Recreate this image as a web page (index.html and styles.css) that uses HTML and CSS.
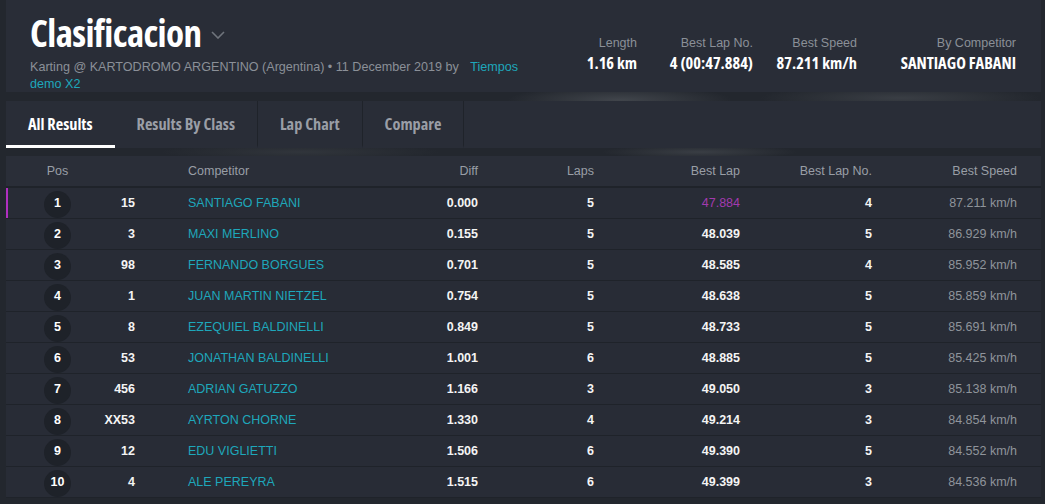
FILE: index.html
```html
<!DOCTYPE html>
<html lang="es">
<head>
<meta charset="utf-8">
<title>Clasificacion</title>
<link rel="stylesheet" href="styles.css">
</head>
<body>
<div class="page">
  <header class="hero">
    <div class="hero-left">
      <h1 class="title">Clasificacion <svg class="chev" width="14" height="8" viewBox="0 0 14 8"><path d="M1 1l6 6 6-6" fill="none" stroke="#6f747c" stroke-width="1.6"/></svg></h1>
      <p class="sub">Karting @ KARTODROMO ARGENTINO (Argentina) • 11 December 2019 by <a class="link"><span>Tiempos</span> <span>demo X2</span></a></p>
    </div>
    <div class="stats">
      <div class="stat s1"><div class="lbl">Length</div><div class="val">1.16 km</div></div>
      <div class="stat s2"><div class="lbl">Best Lap No.</div><div class="val">4 (00:47.884)</div></div>
      <div class="stat s3"><div class="lbl">Best Speed</div><div class="val">87.211 km/h</div></div>
      <div class="stat s4"><div class="lbl">By Competitor</div><div class="val">SANTIAGO FABANI</div></div>
    </div>
  </header>

  <nav class="tabs">
    <div class="tab active">All Results</div>
    <div class="tab sep">Results By Class</div>
    <div class="tab sep">Lap Chart</div>
    <div class="tab sep">Compare</div>
  </nav>

  <div class="table">
    <div class="row head">
      <div class="c pos"><span class="pw">Pos</span></div>
      <div class="c car"></div>
      <div class="c comp">Competitor</div>
      <div class="c r">Diff</div>
      <div class="c r">Laps</div>
      <div class="c r">Best Lap</div>
      <div class="c r">Best Lap No.</div>
      <div class="c r">Best Speed</div>
    </div>
    <div class="row first">
      <div class="c pos"><span class="circle">1</span></div>
      <div class="c car b">15</div>
      <div class="c comp name">SANTIAGO FABANI</div>
      <div class="c r b">0.000</div>
      <div class="c r b">5</div>
      <div class="c r best">47.884</div>
      <div class="c r b">4</div>
      <div class="c r spd">87.211 km/h</div>
    </div>
    <div class="row">
      <div class="c pos"><span class="circle">2</span></div>
      <div class="c car b">3</div>
      <div class="c comp name">MAXI MERLINO</div>
      <div class="c r b">0.155</div>
      <div class="c r b">5</div>
      <div class="c r b">48.039</div>
      <div class="c r b">5</div>
      <div class="c r spd">86.929 km/h</div>
    </div>
    <div class="row">
      <div class="c pos"><span class="circle">3</span></div>
      <div class="c car b">98</div>
      <div class="c comp name">FERNANDO BORGUES</div>
      <div class="c r b">0.701</div>
      <div class="c r b">5</div>
      <div class="c r b">48.585</div>
      <div class="c r b">4</div>
      <div class="c r spd">85.952 km/h</div>
    </div>
    <div class="row">
      <div class="c pos"><span class="circle">4</span></div>
      <div class="c car b">1</div>
      <div class="c comp name">JUAN MARTIN NIETZEL</div>
      <div class="c r b">0.754</div>
      <div class="c r b">5</div>
      <div class="c r b">48.638</div>
      <div class="c r b">5</div>
      <div class="c r spd">85.859 km/h</div>
    </div>
    <div class="row">
      <div class="c pos"><span class="circle">5</span></div>
      <div class="c car b">8</div>
      <div class="c comp name">EZEQUIEL BALDINELLI</div>
      <div class="c r b">0.849</div>
      <div class="c r b">5</div>
      <div class="c r b">48.733</div>
      <div class="c r b">5</div>
      <div class="c r spd">85.691 km/h</div>
    </div>
    <div class="row">
      <div class="c pos"><span class="circle">6</span></div>
      <div class="c car b">53</div>
      <div class="c comp name">JONATHAN BALDINELLI</div>
      <div class="c r b">1.001</div>
      <div class="c r b">6</div>
      <div class="c r b">48.885</div>
      <div class="c r b">5</div>
      <div class="c r spd">85.425 km/h</div>
    </div>
    <div class="row">
      <div class="c pos"><span class="circle">7</span></div>
      <div class="c car b">456</div>
      <div class="c comp name">ADRIAN GATUZZO</div>
      <div class="c r b">1.166</div>
      <div class="c r b">3</div>
      <div class="c r b">49.050</div>
      <div class="c r b">3</div>
      <div class="c r spd">85.138 km/h</div>
    </div>
    <div class="row">
      <div class="c pos"><span class="circle">8</span></div>
      <div class="c car b">XX53</div>
      <div class="c comp name">AYRTON CHORNE</div>
      <div class="c r b">1.330</div>
      <div class="c r b">4</div>
      <div class="c r b">49.214</div>
      <div class="c r b">3</div>
      <div class="c r spd">84.854 km/h</div>
    </div>
    <div class="row">
      <div class="c pos"><span class="circle">9</span></div>
      <div class="c car b">12</div>
      <div class="c comp name">EDU VIGLIETTI</div>
      <div class="c r b">1.506</div>
      <div class="c r b">6</div>
      <div class="c r b">49.390</div>
      <div class="c r b">5</div>
      <div class="c r spd">84.552 km/h</div>
    </div>
    <div class="row">
      <div class="c pos"><span class="circle">10</span></div>
      <div class="c car b">4</div>
      <div class="c comp name">ALE PEREYRA</div>
      <div class="c r b">1.515</div>
      <div class="c r b">6</div>
      <div class="c r b">49.399</div>
      <div class="c r b">3</div>
      <div class="c r spd">84.536 km/h</div>
    </div>
  </div>
</div>
</body>
</html>
```

FILE: styles.css
```css
* { box-sizing: border-box; }
html, body { margin: 0; padding: 0; }
body {
  width: 1045px;
  height: 504px;
  overflow: hidden;
  background:
    radial-gradient(ellipse 160px 20px at 620px 100px, rgba(120,125,130,0.35), transparent 70%),
    radial-gradient(ellipse 200px 18px at 900px 98px, rgba(110,115,120,0.3), transparent 70%),
    radial-gradient(ellipse 140px 10px at 700px 152px, rgba(110,115,120,0.3), transparent 70%),
    radial-gradient(ellipse 200px 12px at 300px 152px, rgba(90,95,100,0.25), transparent 70%),
    #23272e;
  font-family: "Liberation Sans", Arial, sans-serif;
  font-size: 12.5px;
  color: #fff;
}
.page {
  padding: 0 4px 0 6px;
}
.hero {
  height: 92px;
  background: #292d37;
  display: flex;
  justify-content: space-between;
  padding: 0 25px 0 24px;
}
.hero-left {
  width: 500px;
  padding-top: 10px;
}
.title {
  margin: 0;
  font-family: "Open Sans", sans-serif;
  font-stretch: 75%;
  font-weight: 700;
  font-size: 37px;
  line-height: 46px;
  letter-spacing: -0.6px;
  color: #fff;
  display: flex;
  align-items: center;
}
.chev { margin-left: 10px; margin-top: 4px; }
.sub {
  margin: 3px 0 0;
  font-size: 12.6px;
  line-height: 17px;
  color: #8b9098;
}
.link {
  color: #1ea7bb;
  margin-left: 8px;
}
.stats {
  display: flex;
  padding-top: 35px;
}
.stat { text-align: right; }
.s1 { width: 60px; }
.s2 { width: 116px; }
.s3 { width: 104px; }
.s4 { width: 159px; }
.lbl {
  color: #8b9098;
  font-size: 12.5px;
  line-height: 16px;
}
.val {
  font-family: "Open Sans", sans-serif;
  font-stretch: 75%;
  font-weight: 700;
  font-size: 16.4px;
  line-height: 23px;
  color: #fff;
}

.tabs {
  margin-top: 9px;
  height: 47px;
  background: #292d37;
  display: flex;
}
.tab {
  padding: 0 22px;
  height: 47px;
  line-height: 46px;
  font-family: "Open Sans", sans-serif;
  font-stretch: 75%;
  font-weight: 700;
  font-size: 16.3px;
  color: #9a9ea6;
  border-bottom: 3px solid transparent;
}
.tab.active {
  color: #fff;
  border-bottom-color: #fff;
}
.tab.sep { border-right: 1px solid #1f232a; }

.table {
  margin-top: 8px;
  background: #282c36;
}
.row {
  display: grid;
  grid-template-columns: 90px 92px 192px 98px 116px 146px 132px 145px;
  padding-right: 24px;
  height: 31px;
  align-items: center;
  border-bottom: 1px solid #1f232a;
}
.row.head {
  height: 32px;
  border-bottom: 2px solid #1f232a;
  background: #2a2e38;
  color: #999ea6;
}
.row.first { box-shadow: inset 2px 0 0 #b02fc0; }
.c { white-space: nowrap; }
.r { text-align: right; }
.pos {
  padding-left: 38px;
  display: flex;
}
.pw { width: 27px; text-align: center; }
.circle {
  width: 27px;
  height: 27px;
  border-radius: 50%;
  background: #1e2229;
  display: flex;
  justify-content: center;
  padding-top: 5px;
  line-height: 14px;
  font-weight: 700;
  color: #fff;
  margin-top: 2px;
}
.car { text-align: right; padding-right: 53px; }
.b { font-weight: 700; color: #f4f4f4; }
.name { color: #1ea7bb; }
.best { color: #a23aaf; }
.spd { color: #8f949b; }
```
